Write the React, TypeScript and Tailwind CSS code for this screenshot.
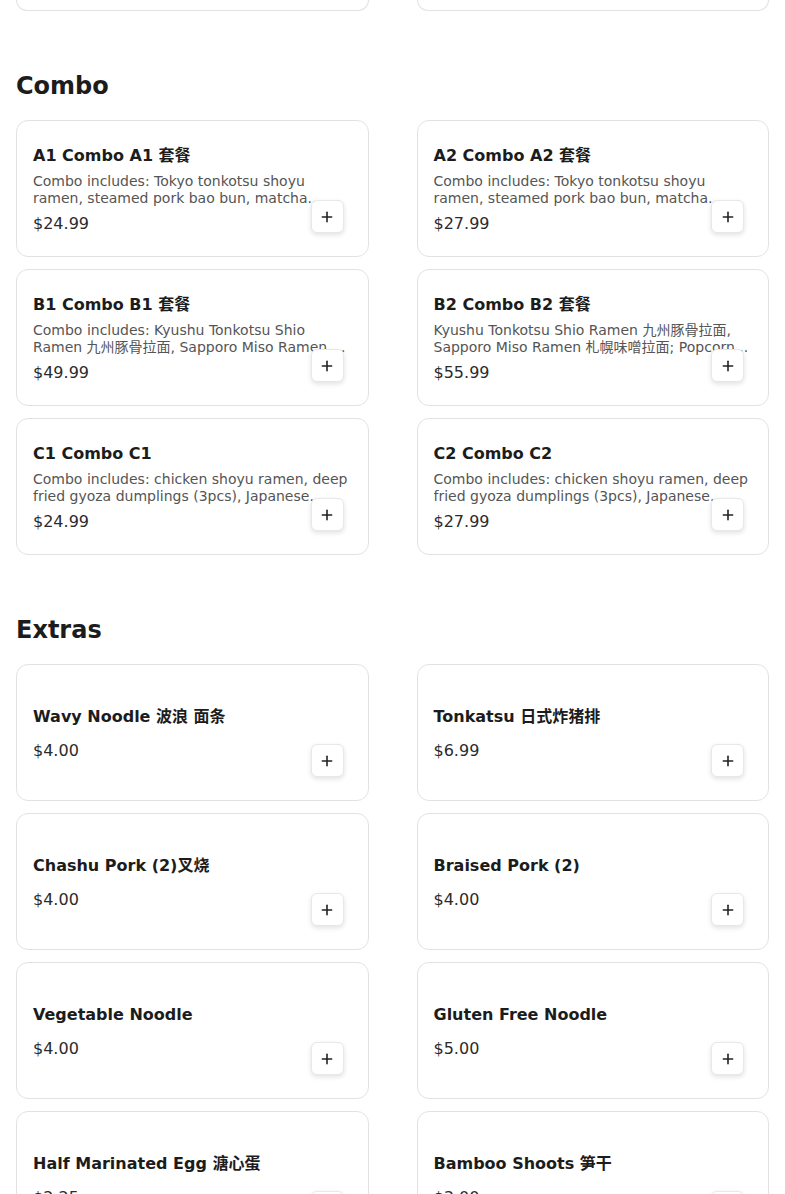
import React from 'react';
import { Plus } from 'lucide-react';

type Item = {
  name: string;
  price: string;
  description?: string;
};

const combos: Item[] = [
  {
    name: 'A1 Combo A1 套餐',
    description: 'Combo includes: Tokyo tonkotsu shoyu ramen, steamed pork bao bun, matcha...',
    price: '$24.99',
  },
  {
    name: 'A2 Combo A2 套餐',
    description: 'Combo includes: Tokyo tonkotsu shoyu ramen, steamed pork bao bun, matcha...',
    price: '$27.99',
  },
  {
    name: 'B1 Combo B1 套餐',
    description: 'Combo includes: Kyushu Tonkotsu Shio Ramen 九州豚骨拉面, Sapporo Miso Ramen 札幌味噌拉面...',
    price: '$49.99',
  },
  {
    name: 'B2 Combo B2 套餐',
    description: 'Kyushu Tonkotsu Shio Ramen 九州豚骨拉面, Sapporo Miso Ramen 札幌味噌拉面; Popcorn...',
    price: '$55.99',
  },
  {
    name: 'C1 Combo C1',
    description: 'Combo includes: chicken shoyu ramen, deep fried gyoza dumplings (3pcs), Japanese...',
    price: '$24.99',
  },
  {
    name: 'C2 Combo C2',
    description: 'Combo includes: chicken shoyu ramen, deep fried gyoza dumplings (3pcs), Japanese...',
    price: '$27.99',
  },
];

const extras: Item[] = [
  { name: 'Wavy Noodle 波浪 面条', price: '$4.00' },
  { name: 'Tonkatsu 日式炸猪排', price: '$6.99' },
  { name: 'Chashu Pork (2)叉烧', price: '$4.00' },
  { name: 'Braised Pork (2)', price: '$4.00' },
  { name: 'Vegetable Noodle', price: '$4.00' },
  { name: 'Gluten Free Noodle', price: '$5.00' },
  { name: 'Half Marinated Egg 溏心蛋', price: '$2.25' },
  { name: 'Bamboo Shoots 笋干', price: '$3.00' },
];

function MenuCard({ item }: { item: Item }) {
  return (
    <div className="relative h-[137px] rounded-xl border border-[#e2e2e2] bg-white px-4 pt-[2px] flex flex-col justify-center">
      <h3 className="text-base leading-6 font-bold text-[#1c1c1c]">{item.name}</h3>
      {item.description ? (
        <>
          <p className="mt-[5px] text-sm leading-[17.5px] text-[#555555] line-clamp-2">{item.description}</p>
          <p className="mt-1 text-base leading-6 text-[#2b2b2b]">{item.price}</p>
        </>
      ) : (
        <p className="mt-2.5 text-base leading-6 text-[#2b2b2b]">{item.price}</p>
      )}
      <button
        type="button"
        className="absolute right-6 bottom-[23px] z-10 flex h-[33px] w-[33px] items-center justify-center rounded-md border border-[#e8e8e8] bg-white text-[#222222] shadow-[0_2px_5px_rgba(0,0,0,0.12)]"
      >
        <Plus size={16} strokeWidth={2.4} />
      </button>
    </div>
  );
}

function Section({ title, items }: { title: string; items: Item[] }) {
  return (
    <section>
      <h2 className="mt-[59px] mb-[18px] text-2xl leading-8 font-bold text-[#1c1c1c]">{title}</h2>
      <div className="grid grid-cols-2 gap-x-12 gap-y-3">
        {items.map((item) => (
          <MenuCard key={item.name} item={item} />
        ))}
      </div>
    </section>
  );
}

export default function App() {
  return (
    <div
      className="min-h-screen bg-white px-4"
      style={{ fontFamily: '"DejaVu Sans", "Noto Sans CJK SC", sans-serif' }}
    >
      {/* bottom of the previous section's last row */}
      <div className="grid grid-cols-2 gap-x-12">
        <div className="h-[11px] rounded-b-xl border border-t-0 border-[#e2e2e2]" />
        <div className="h-[11px] rounded-b-xl border border-t-0 border-[#e2e2e2]" />
      </div>
      <Section title="Combo" items={combos} />
      <Section title="Extras" items={extras} />
    </div>
  );
}
